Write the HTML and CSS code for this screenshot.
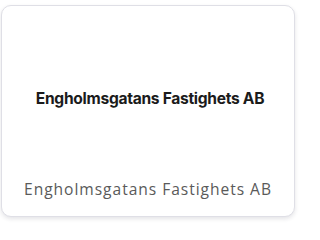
FILE: index.html
```html
<!DOCTYPE html>
<html>
<head>
<meta charset="utf-8">
<link rel="stylesheet" href="styles.css">
</head>
<body>
<div class="page">
  <div class="card">
    <div class="logo"><span class="logo-text">Engholmsgatans Fastighets AB</span></div>
    <div class="caption">Engholmsgatans Fastighets AB</div>
  </div>
</div>
</body>
</html>
```
FILE: styles.css
```css
html, body { margin: 0; padding: 0; background: #ffffff; }
.page { padding: 5px 0 6px 1px; }
.card {
  box-sizing: border-box;
  width: 294px;
  height: 212px;
  background: #fff;
  border: 1px solid #dfdfe6;
  border-radius: 10px;
  box-shadow: 0 2px 4px rgba(30, 30, 60, 0.12);
  display: flex;
  flex-direction: column;
}
.logo {
  height: 160px;
  display: flex;
  align-items: center;
  justify-content: center;
  padding-top: 24px;
  box-sizing: border-box;
}
.logo-text {
  font-family: Inter, "Noto Sans", sans-serif;
  font-weight: 700;
  font-size: 15.6px;
  letter-spacing: -0.3px;
  color: #1b1b1b;
  padding-left: 4px;
}
.caption {
  font-family: "Open Sans", "Noto Sans", sans-serif;
  font-size: 15.6px;
  letter-spacing: 0.95px;
  color: #5a5a5a;
  text-align: center;
  line-height: 20px;
  margin-top: 13px;
}
```
